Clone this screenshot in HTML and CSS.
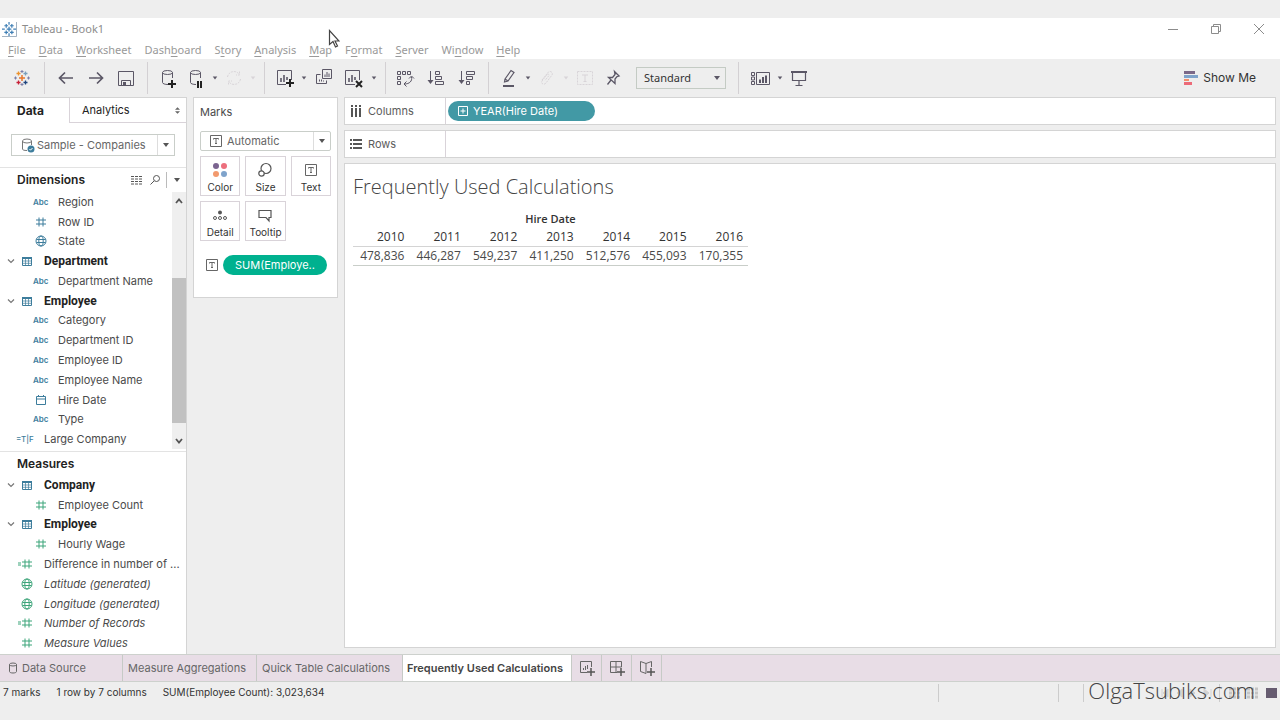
FILE: index.html
```html
<!DOCTYPE html>
<html lang="en">
<head>
    <meta charset="UTF-8">
    <meta name="viewport" content="width=device-width, initial-scale=1.0">
    <title>Tableau - Book1</title>
    <link rel="stylesheet" href="styles.css">
</head>
<body>
    <!-- shared icons -->
    <svg class="sprite" aria-hidden="true">
        <symbol id="i-caret" viewBox="0 0 8 8"><path d="M1 2h6L4 6z" fill="currentColor"/></symbol>
        <symbol id="i-logo" viewBox="0 0 16 16">
            <path d="M8 5v6M5 8h6" stroke="#e8762c" stroke-width="1.5"/>
            <path d="M4.500 1.500v4M2.500 3.500h4" stroke="#eb912c" stroke-width="1.300"/>
            <path d="M11.500 1.500v4M9.500 3.500h4" stroke="#7aa0bd" stroke-width="1.300"/>
            <path d="M4.500 10.500v4M2.500 12.500h4" stroke="#c72037" stroke-width="1.300"/>
            <path d="M11.500 10.500v4M9.500 12.500h4" stroke="#1f457e" stroke-width="1.300"/>
            <path d="M8 0v3M6.500 1.500h3M8 13v3M6.500 14.500h3M1.500 6.500v3M0 8h3M14.500 6.500v3M13 8h3" stroke="#7b7fa8"/>
        </symbol>
        <symbol id="i-logo-blue" viewBox="0 0 16 16">
            <path d="M0 15.500h15.500V0" fill="none" stroke="#9ab"/>
            <path d="M7.500 5v5M5 7.500h5M4.500 2v4M2.500 4h4M10.500 2v4M8.500 4h4M4.500 9v4M2.500 11h4M10.500 9v4M8.500 11h4M7.500 0v3M7.500 12v3M0 7.500h3M12 7.500h3" stroke="#3f7fb5" stroke-width="1.300"/>
        </symbol>
        <symbol id="i-back" viewBox="0 0 20 20"><path d="M17 10H4M9 4.500L3.500 10 9 15.500" fill="none" stroke="currentColor" stroke-width="1.700"/></symbol>
        <symbol id="i-forward" viewBox="0 0 20 20"><path d="M3 10h13M11 4.500l5.500 5.500-5.500 5.500" fill="none" stroke="currentColor" stroke-width="1.700"/></symbol>
        <symbol id="i-save" viewBox="0 0 20 20"><path d="M2.500 3.500h15v14h-15zM5.500 17v-4.500h9V17" fill="none" stroke="currentColor"/><path d="M7 14h3v3H7z" fill="currentColor"/></symbol>
        <symbol id="i-db-plus" viewBox="0 0 20 20"><path d="M10 16.500c-3 0-5.500-.8-5.500-2V4.500M14.500 10V4.500" fill="none" stroke="currentColor"/><ellipse cx="9.500" cy="4.500" rx="5" ry="2" fill="none" stroke="currentColor"/><path d="M14 12v8M10 16h8" stroke="#222" stroke-width="2"/></symbol>
        <symbol id="i-db-pause" viewBox="0 0 20 20"><path d="M10 16.500c-3 0-5.500-.8-5.500-2V4.500M14.500 10V4.500" fill="none" stroke="currentColor"/><ellipse cx="9.500" cy="4.500" rx="5" ry="2" fill="none" stroke="currentColor"/><path d="M12 13v7M15 13v7" stroke="#222" stroke-width="2"/></symbol>
        <symbol id="i-refresh" viewBox="0 0 20 20"><path d="M3.500 9A6.500 6.500 0 0 1 15 6M16.500 11A6.500 6.500 0 0 1 5 14M15.500 3.500V7H12M4.500 16.500V13H8" fill="none" stroke="currentColor" stroke-dasharray="2 1"/></symbol>
        <symbol id="i-sheet-plus" viewBox="0 0 20 20"><path d="M11 16.500H2.500v-14h14V12" fill="none" stroke="currentColor"/><path d="M6 14V10M9 14V7M12 12V9" stroke="currentColor" stroke-width="1.600"/><path d="M15 11v8M11 15h8" stroke="#222" stroke-width="2"/></symbol>
        <symbol id="i-sheet-copy" viewBox="0 0 20 20"><path d="M8.500 1.500h9v9h-9zM6.500 6.500h-4v9h10v-3" fill="none" stroke="currentColor"/><path d="M11 9V6.500M13 9V4M15 9V5.500M5.500 13.500v-2M7.500 13.500v-2M9.500 13.500v-1" stroke="currentColor"/></symbol>
        <symbol id="i-sheet-clear" viewBox="0 0 20 20"><path d="M11 16.500H1.500v-14h14V12" fill="none" stroke="currentColor"/><path d="M5 14V10M8 14V7M11 12V9" stroke="currentColor" stroke-width="1.600"/><path d="M12 13l6 6M18 13l-6 6" stroke="#222" stroke-width="2"/></symbol>
        <symbol id="i-swap" viewBox="0 0 20 20"><path d="M2.500 3.500h3v3h-3zM7.500 3.500h3v3h-3zM12.500 3.500h3v3h-3zM2.500 8.500h3v3h-3zM2.500 13.500h3v3h-3zM16.500 9c1 4-2 7-7 7M14 10.500L16.500 8l2.500 2.500M11.500 13.500L9 16l2.500 2.500" fill="none" stroke="currentColor"/></symbol>
        <symbol id="i-sort-asc" viewBox="0 0 20 20"><path d="M4.500 3v11" stroke="currentColor"/><path d="M1.500 12h6l-3 4z" fill="currentColor"/><path d="M9.500 3.500h4v3h-4zM9.500 8.500h6v3h-6zM9.500 13.500h8v3h-8z" fill="none" stroke="currentColor"/></symbol>
        <symbol id="i-sort-desc" viewBox="0 0 20 20"><path d="M4.500 3v11" stroke="currentColor"/><path d="M1.500 12h6l-3 4z" fill="currentColor"/><path d="M9.500 3.500h8v3h-8zM9.500 8.500h6v3h-6zM9.500 13.500h3v3h-3z" fill="none" stroke="currentColor"/></symbol>
        <symbol id="i-pen" viewBox="0 0 20 20"><path d="M6 11l6-8.500 3 2L9 13l-3.500 1zM6 11l3 2" fill="none" stroke="currentColor" stroke-width="1.200"/><path d="M4 18h11" stroke="currentColor" stroke-width="2"/></symbol>
        <symbol id="i-clip" viewBox="0 0 20 20"><path d="M5 12l6-7.500c2-2.500 5.500 0 4 2.500l-6 8c-2 2.500-5.500.5-4-2l5-6.500c1-1 2.500 0 2 1l-4 5" fill="none" stroke="currentColor" stroke-dasharray="2 1"/></symbol>
        <symbol id="i-label" viewBox="0 0 20 20"><path d="M2.500 3.500h15v13h-15z" fill="none" stroke="currentColor" stroke-dasharray="2 1"/><path d="M7 7h6M10 7v6.500M8.500 13.500h3" stroke="currentColor"/></symbol>
        <symbol id="i-pin" viewBox="0 0 20 20"><path d="M11.500 3.500l4.500 4.500-2 .5-2 2.500 0 4.500L5.500 9.500l4 0 2.500-3zM8 12l-3.500 4.500" fill="none" stroke="currentColor" stroke-width="1.300"/></symbol>
        <symbol id="i-cards" viewBox="0 0 22 20"><path d="M2.500 4.500h3v3h-3zM2.500 9h3v3h-3zM2.500 13.500h3v3h-3zM7.500 4.500h13v12h-13z" fill="none" stroke="currentColor"/><path d="M11 15v-3.500M14 15V9M17 15V7.500" stroke="currentColor" stroke-width="2"/></symbol>
        <symbol id="i-present" viewBox="0 0 20 20"><path d="M2 4h16" stroke="currentColor" stroke-width="2"/><path d="M3.500 5v7.500h13V5M10 13v5M6.500 17.500h7" fill="none" stroke="currentColor" stroke-width="1.200"/></symbol>
        <symbol id="i-hash" viewBox="0 0 12 12"><path d="M4 1.500v9M8 1.500v9M1 4h10M1 8h10" stroke="currentColor"/></symbol>
        <symbol id="i-calc-hash" viewBox="0 0 16 12"><path d="M8 1.500v9M12 1.500v9M5 4h10M5 8h10M1 5h3M1 7h3" stroke="currentColor"/></symbol>
        <symbol id="i-globe" viewBox="0 0 12 12"><circle cx="6" cy="6" r="5" fill="none" stroke="currentColor"/><ellipse cx="6" cy="6" rx="2.200" ry="5" fill="none" stroke="currentColor"/><path d="M1.500 4.500h9M1.500 7.500h9" stroke="currentColor"/></symbol>
        <symbol id="i-table" viewBox="0 0 12 12"><path d="M1.500 2.500h9v8h-9z" fill="none" stroke="currentColor"/><path d="M1.500 6h9M1.500 8.300h9M4.500 4v6.500M7.500 4v6.500" stroke="currentColor" stroke-width=".7"/><path d="M1 2h10v2H1z" fill="currentColor"/></symbol>
        <symbol id="i-date" viewBox="0 0 12 12"><path d="M1.500 2.500h9v8h-9zM1.500 5h9M3.500 1v2M8.500 1v2" fill="none" stroke="currentColor"/></symbol>
        <symbol id="i-chevron" viewBox="0 0 10 10"><path d="M2 3.500l3 3 3-3" fill="none" stroke="currentColor" stroke-width="1.200"/></symbol>
        <symbol id="i-text" viewBox="0 0 14 12"><path d="M1.500.5h11v11h-11z" fill="none" stroke="currentColor"/><path d="M4.500 4.500v-1h5v1M7 3.500v5M6 8.500h2" fill="none" stroke="currentColor"/></symbol>
    </svg>

    <header class="titlebar">
        <svg class="app-icon"><use href="#i-logo-blue"/></svg>
        <span class="app-title">Tableau - Book1</span>
        <div class="window-buttons">
            <button aria-label="Minimize"><svg viewBox="0 0 10 10"><path d="M0 5.500h10" stroke="currentColor"/></svg></button>
            <button aria-label="Restore"><svg viewBox="0 0 10 10"><path d="M.5 2.500h7v7h-7zM2.500 2V.5h7v7H8" fill="none" stroke="currentColor"/></svg></button>
            <button aria-label="Close"><svg viewBox="0 0 10 10"><path d="M0 0l10 10M10 0L0 10" stroke="currentColor"/></svg></button>
        </div>
        <svg class="pointer" viewBox="0 0 12 20"><path d="M1.500 1.500v14l3.500-3 2.500 5.500 2-1-2.500-5h4z" fill="#fff" stroke="#444" stroke-width="1.200"/></svg>
    </header>

    <nav class="menu">
        <a href="#"><u>F</u>ile</a>
        <a href="#"><u>D</u>ata</a>
        <a href="#"><u>W</u>orksheet</a>
        <a href="#">Dash<u>b</u>oard</a>
        <a href="#">S<u>t</u>ory</a>
        <a href="#"><u>A</u>nalysis</a>
        <a href="#"><u>M</u>ap</a>
        <a href="#">F<u>o</u>rmat</a>
        <a href="#"><u>S</u>erver</a>
        <a href="#">Wi<u>n</u>dow</a>
        <a href="#"><u>H</u>elp</a>
    </nav>

    <div class="toolbar">
        <button class="start" aria-label="Start page"><svg><use href="#i-logo"/></svg></button>
        <div class="tool-group">
            <button class="wide" aria-label="Undo"><svg><use href="#i-back"/></svg></button>
            <button class="wide" aria-label="Redo"><svg><use href="#i-forward"/></svg></button>
            <button class="wide" aria-label="Save"><svg><use href="#i-save"/></svg></button>
        </div>
        <div class="tool-group">
            <button aria-label="New data source"><svg><use href="#i-db-plus"/></svg></button>
            <button aria-label="Pause updates"><svg><use href="#i-db-pause"/></svg></button>
            <button class="drop" aria-label="Update options"><svg><use href="#i-caret"/></svg></button>
            <button class="off" aria-label="Run update"><svg><use href="#i-refresh"/></svg></button>
            <button class="drop off" aria-label="Run options"><svg><use href="#i-caret"/></svg></button>
        </div>
        <div class="tool-group">
            <button aria-label="New worksheet"><svg><use href="#i-sheet-plus"/></svg></button>
            <button class="drop" aria-label="New options"><svg><use href="#i-caret"/></svg></button>
            <button class="wide" aria-label="Duplicate"><svg><use href="#i-sheet-copy"/></svg></button>
            <button class="wide" aria-label="Clear sheet"><svg><use href="#i-sheet-clear"/></svg></button>
            <button class="drop" aria-label="Clear options"><svg><use href="#i-caret"/></svg></button>
        </div>
        <div class="tool-group tight">
            <button class="wide" aria-label="Swap rows and columns"><svg><use href="#i-swap"/></svg></button>
            <button class="wide" aria-label="Sort ascending"><svg><use href="#i-sort-asc"/></svg></button>
            <button class="wide" aria-label="Sort descending"><svg><use href="#i-sort-desc"/></svg></button>
        </div>
        <div class="tool-group">
            <button aria-label="Highlight"><svg><use href="#i-pen"/></svg></button>
            <button class="drop" aria-label="Highlight options"><svg><use href="#i-caret"/></svg></button>
            <button class="off" aria-label="Group members"><svg><use href="#i-clip"/></svg></button>
            <button class="drop off" aria-label="Group options"><svg><use href="#i-caret"/></svg></button>
            <button class="off" aria-label="Show mark labels"><svg><use href="#i-label"/></svg></button>
            <button aria-label="Fix axes"><svg><use href="#i-pin"/></svg></button>
            <div class="fit">
                <select aria-label="Fit"><option>Standard</option></select>
                <svg><use href="#i-caret"/></svg>
            </div>
        </div>
        <div class="tool-group">
            <button class="wide" aria-label="Show or hide cards"><svg class="cards"><use href="#i-cards"/></svg></button>
            <button class="drop" aria-label="Card options"><svg><use href="#i-caret"/></svg></button>
            <button aria-label="Presentation mode"><svg><use href="#i-present"/></svg></button>
        </div>
        <button class="show-me">
            <svg viewBox="0 0 14 14"><path d="M0 0h11v3H0z" fill="#7b6888"/><path d="M0 4h14v3H0z" fill="#7fa3cb"/><path d="M0 8h5v2H0z" fill="#f28e6b"/><path d="M0 11h8v3H0z" fill="#ec6a78"/></svg>
            Show Me
        </button>
    </div>

    <div class="workspace">
        <aside class="sidebar">
            <div class="side-tabs">
                <button class="active">Data</button>
                <button class="analytics">Analytics
                    <svg viewBox="0 0 6 8"><path d="M0 3l3-3 3 3zM0 5l3 3 3-3z" fill="currentColor"/></svg>
                </button>
            </div>
            <div class="source">
                <svg class="db" viewBox="0 0 14 15"><path d="M6 12.500c-3 0-4.500-.5-4.500-1.500V3M10.500 7V3" fill="none" stroke="#777"/><ellipse cx="6" cy="3" rx="4.500" ry="2" fill="none" stroke="#777"/><circle cx="10" cy="11" r="3.500" fill="#3d7d9c"/><path d="M8.500 11l1 1.200 2-2.200" fill="none" stroke="#fff"/></svg>
                <select aria-label="Data source"><option>Sample - Companies</option></select>
                <span class="arrow"><svg><use href="#i-caret"/></svg></span>
            </div>

            <div class="side-head lined">
                <h2>Dimensions</h2>
                <button aria-label="View data"><svg viewBox="0 0 12 12"><path d="M0 2.500h12M0 5h12M0 7.500h12M0 10h12" stroke="#555" stroke-dasharray="3 1"/></svg></button>
                <button aria-label="Find field"><svg viewBox="0 0 12 12"><circle cx="7.500" cy="4.500" r="3" fill="none" stroke="#555"/><path d="M5 7l-3.500 3.500" stroke="#555"/></svg></button>
                <button class="more" aria-label="Field options"><svg><use href="#i-caret"/></svg></button>
            </div>
            <div class="dimensions">
                <ul class="fields">
                    <li class="child"><span class="abc">Abc</span>Region</li>
                    <li class="child"><svg><use href="#i-hash"/></svg>Row ID</li>
                    <li class="child"><svg><use href="#i-globe"/></svg>State</li>
                    <li class="table"><svg class="chev"><use href="#i-chevron"/></svg><svg><use href="#i-table"/></svg>Department</li>
                    <li class="child"><span class="abc">Abc</span>Department Name</li>
                    <li class="table"><svg class="chev"><use href="#i-chevron"/></svg><svg><use href="#i-table"/></svg>Employee</li>
                    <li class="child"><span class="abc">Abc</span>Category</li>
                    <li class="child"><span class="abc">Abc</span>Department ID</li>
                    <li class="child"><span class="abc">Abc</span>Employee ID</li>
                    <li class="child"><span class="abc">Abc</span>Employee Name</li>
                    <li class="child"><svg><use href="#i-date"/></svg>Hire Date</li>
                    <li class="child"><span class="abc">Abc</span>Type</li>
                    <li class="root"><span class="abc tf">=T|F</span>Large Company</li>
                </ul>
                <div class="scroll">
                    <button aria-label="Scroll up"><svg viewBox="0 0 8 8"><path d="M1 6l3-3.500L7 6" fill="none" stroke="#555" stroke-width="1.800"/></svg></button>
                    <div class="track"><div class="thumb"></div></div>
                    <button aria-label="Scroll down"><svg viewBox="0 0 8 8"><path d="M1 2l3 3.500L7 2" fill="none" stroke="#555" stroke-width="1.800"/></svg></button>
                </div>
            </div>

            <div class="side-head measures-head">
                <h2>Measures</h2>
            </div>
            <ul class="fields measures">
                <li class="table"><svg class="chev"><use href="#i-chevron"/></svg><svg><use href="#i-table"/></svg>Company</li>
                <li class="child"><svg><use href="#i-hash"/></svg>Employee Count</li>
                <li class="table"><svg class="chev"><use href="#i-chevron"/></svg><svg><use href="#i-table"/></svg>Employee</li>
                <li class="child"><svg><use href="#i-hash"/></svg>Hourly Wage</li>
                <li class="root"><svg class="calc"><use href="#i-calc-hash"/></svg>Difference in number of ...</li>
                <li class="root gen"><svg><use href="#i-globe"/></svg>Latitude (generated)</li>
                <li class="root gen"><svg><use href="#i-globe"/></svg>Longitude (generated)</li>
                <li class="root gen"><svg class="calc"><use href="#i-calc-hash"/></svg>Number of Records</li>
                <li class="root gen"><svg><use href="#i-hash"/></svg>Measure Values</li>
            </ul>
        </aside>

        <section class="marks">
            <h3>Marks</h3>
            <div class="mark-type">
                <svg class="t-icon"><use href="#i-text"/></svg>
                <select aria-label="Mark type"><option>Automatic</option></select>
                <span class="arrow"><svg><use href="#i-caret"/></svg></span>
            </div>
            <div class="mark-buttons">
                <button><svg viewBox="0 0 16 16"><circle cx="4" cy="4" r="3" fill="#7b6490"/><circle cx="12" cy="4" r="3" fill="#ec6f7d"/><circle cx="4" cy="12" r="3" fill="#f29a6e"/><circle cx="12" cy="12" r="3" fill="#7fa3cb"/></svg>Color</button>
                <button><svg viewBox="0 0 16 16"><circle cx="9" cy="6.500" r="5" fill="none" stroke="#555" stroke-width="1.200"/><circle cx="4.500" cy="11.500" r="2.700" fill="#fff" stroke="#555" stroke-width="1.200"/></svg>Size</button>
                <button><svg viewBox="0 0 16 16"><path d="M2.500 2.500h11v11h-11zM5.500 6.500v-1h5v1M8 5.500v5M7 10.500h2" fill="none" stroke="#666"/></svg>Text</button>
                <button><svg viewBox="0 0 16 16"><circle cx="8" cy="5.500" r="2" fill="#555"/><circle cx="3" cy="11" r="1.500" fill="none" stroke="#555"/><circle cx="8" cy="11" r="1.500" fill="none" stroke="#555"/><circle cx="13" cy="11" r="1.500" fill="none" stroke="#555"/></svg>Detail</button>
                <button><svg viewBox="0 0 16 16"><path d="M2 3.500h12v7h-2V14l-3-3.500H2z" fill="none" stroke="#555" stroke-width="1.200"/></svg>Tooltip</button>
            </div>
            <div class="mark-field">
                <svg class="t-icon"><use href="#i-text"/></svg>
                <button class="pill measure">SUM(Employe..</button>
            </div>
        </section>

        <main class="sheet">
            <div class="shelf">
                <div class="shelf-name">
                    <svg viewBox="0 0 12 12"><path d="M2 0v2M6 0v2M10 0v2M2 3v9M6 3v9M10 3v9" stroke="#555" stroke-width="2"/></svg>Columns
                </div>
                <button class="pill dimension">
                    <svg viewBox="0 0 10 10"><path d="M.5.5h9v9h-9zM2.500 5h5M5 2.500v5" fill="none" stroke="#fff"/></svg>YEAR(Hire Date)
                </button>
            </div>
            <div class="shelf">
                <div class="shelf-name">
                    <svg viewBox="0 0 12 12"><path d="M0 2h2M3 2h9M0 6h2M3 6h9M0 10h2M3 10h9" stroke="#555" stroke-width="2"/></svg>Rows
                </div>
            </div>
            <div class="view">
                <h1>Frequently Used Calculations</h1>
                <table>
                    <thead>
                        <tr><th colspan="7" class="group">Hire Date</th></tr>
                        <tr><th>2010</th><th>2011</th><th>2012</th><th>2013</th><th>2014</th><th>2015</th><th>2016</th></tr>
                    </thead>
                    <tbody>
                        <tr><td>478,836</td><td>446,287</td><td>549,237</td><td>411,250</td><td>512,576</td><td>455,093</td><td>170,355</td></tr>
                    </tbody>
                </table>
            </div>
        </main>
    </div>

    <div class="sheet-tabs">
        <button class="data-source"><svg viewBox="0 0 10 12"><ellipse cx="5" cy="2.500" rx="3.500" ry="1.500" fill="none" stroke="#666"/><path d="M1.500 2.500v7c0 2 7 2 7 0v-7" fill="none" stroke="#666"/></svg>Data Source</button>
        <button class="aggregations">Measure Aggregations</button>
        <button class="quick">Quick Table Calculations</button>
        <button class="active">Frequently Used Calculations</button>
        <button class="new" aria-label="New worksheet"><svg viewBox="0 0 16 16"><path d="M8 12.500H1.500v-11h11V7M4.500 10V8M6.500 10V6M8.500 9V5" fill="none" stroke="#666"/><path d="M12 8v8M8 12h8" stroke="#555" stroke-width="1.500"/></svg></button>
        <button class="new" aria-label="New dashboard"><svg viewBox="0 0 16 16"><path d="M8 12.500H1.500v-11h11V7M1.500 7h11M7 1.500v11" fill="none" stroke="#666"/><path d="M12 8v8M8 12h8" stroke="#555" stroke-width="1.500"/></svg></button>
        <button class="new" aria-label="New story"><svg viewBox="0 0 16 16"><path d="M7 13.500l-5.500-2v-10l5.500 2 5.500-2V7M7 3.500v10" fill="none" stroke="#666"/><path d="M12 8v8M8 12h8" stroke="#555" stroke-width="1.500"/></svg></button>
    </div>

    <footer class="status">
        <span>7 marks</span>
        <span>1 row by 7 columns</span>
        <span>SUM(Employee Count): 3,023,634</span>
        <div class="status-cells">
            <div class="cell user"></div>
            <div class="cell"></div>
            <div class="cell nav"><svg viewBox="0 0 130 12"><path d="M78 2v8M84 2l-5 4 5 4zM98 2l-5 4 5 4zM106 2l5 4-5 4zM120 2l5 4-5 4zM127 2v8" fill="#d2d2d2" stroke="#d2d2d2"/></svg></div>
            <div class="cell views">
                <svg viewBox="0 0 34 12"><path d="M2 2h12M2 6h12M2 10h12M20 2h12M20 6h12M20 10h12" stroke="#c4c4c4" stroke-width="3" stroke-dasharray="3 1"/></svg>
                <button aria-label="Show sheet sorter"></button>
            </div>
        </div>
        <div class="watermark">OlgaTsubiks.com</div>
    </footer>
</body>
</html>
```

FILE: styles.css
```css
* {
    box-sizing: border-box;
}

body {
    margin: 0;
    padding-top: 18px;
    min-height: 100vh;
    display: flex;
    flex-direction: column;
    background: #eeeeee;
    color: #4a4a4a;
    font-family: Inter, "Liberation Sans", sans-serif;
    font-size: 11px;
    line-height: 16px;
}

button, select {
    font: inherit;
    color: inherit;
    background: none;
    border: none;
    padding: 0;
    margin: 0;
}

button {
    display: flex;
    align-items: center;
    justify-content: center;
    white-space: nowrap;
}

select {
    appearance: none;
    flex: 1;
    min-width: 0;
}

svg {
    display: block;
    flex: none;
}

h1, h2, h3, ul {
    margin: 0;
    padding: 0;
    font-weight: normal;
}

.sprite {
    position: absolute;
    width: 0;
    height: 0;
}

/* title bar and menu */
.titlebar {
    position: relative;
    display: flex;
    align-items: center;
    height: 22px;
    padding-left: 2px;
    background: #fff;
    color: #8c8c8c;
    font-family: "Noto Sans", sans-serif;
}

.app-icon {
    width: 15px;
    height: 15px;
    margin-right: 5px;
}

.window-buttons {
    display: flex;
    margin-left: auto;
}

.window-buttons button {
    width: 43px;
    height: 18px;
}

.window-buttons svg {
    width: 10px;
    height: 10px;
}

.pointer {
    position: absolute;
    left: 328px;
    top: 11px;
    width: 12px;
    height: 20px;
    z-index: 2;
}

.menu {
    display: flex;
    gap: 13px;
    height: 19px;
    padding: 2px 8px 0;
    background: #fff;
    font-family: "Noto Sans", sans-serif;
}

.menu a {
    color: #999;
    text-decoration: none;
}

.menu u {
    text-underline-offset: 2px;
}

/* toolbar */
.toolbar {
    display: flex;
    align-items: center;
    height: 38px;
    color: #5b5766;
}

.toolbar .start {
    width: 44px;
}

.start svg {
    width: 16px;
    height: 16px;
}

.tool-group {
    display: flex;
    align-items: center;
    height: 32px;
    padding: 0 6px;
    border-left: 1px solid #d3d0d3;
}

.tool-group.tight {
    gap: 1px;
    padding-left: 4px;
}

.tool-group button {
    width: 28px;
    height: 24px;
}

.tool-group button svg {
    width: 20px;
    height: 20px;
}

.tool-group .wide {
    width: 30px;
}

.tool-group .drop {
    width: 10px;
}

.tool-group .drop svg {
    width: 6px;
    height: 6px;
}

.tool-group .wide .cards {
    width: 22px;
}

.tool-group .off {
    color: #d8d4d8;
}

.fit {
    display: flex;
    align-items: center;
    width: 90px;
    height: 22px;
    margin: 0 6px 0 9px;
    padding: 0 4px 0 7px;
    border: 1px solid #c4cbc4;
    color: #333;
    font-family: "Noto Sans", sans-serif;
}

.fit svg {
    width: 8px;
    height: 8px;
    color: #5b5766;
}

.show-me {
    gap: 5px;
    margin-left: auto;
    margin-right: 24px;
    color: #333;
    font-size: 12px;
}

.show-me svg {
    width: 14px;
    height: 14px;
}

/* data pane */
.workspace {
    flex: 1;
    display: flex;
    gap: 6px;
    padding-right: 4px;
}

.sidebar {
    display: flex;
    flex-direction: column;
    width: 187px;
    background: #fff;
    border-right: 1px solid #d4d4d4;
    border-top: 1px solid #d4d4d4;
}

.side-tabs {
    display: flex;
    height: 25px;
    color: #222;
}

.side-tabs button {
    flex: 1;
}

.side-tabs .active {
    flex: none;
    width: 69px;
    padding-right: 8px;
    font-size: 12px;
    font-weight: 700;
}

.side-tabs .analytics {
    justify-content: space-between;
    padding: 0 6px 0 12px;
    border: 1px solid #d9d3d9;
    border-width: 0 0 1px 1px;
}

.analytics svg {
    width: 5px;
    height: 7px;
    color: #666;
}

.source {
    display: flex;
    align-items: center;
    height: 22px;
    margin: 11px 11px;
    padding-left: 9px;
    border: 1px solid #c9cec9;
    color: #666;
}

.source .db {
    width: 14px;
    height: 15px;
    margin-right: 2px;
}

.arrow {
    display: flex;
    align-items: center;
    justify-content: center;
    width: 17px;
    height: 100%;
    border-left: 1px solid #ddd;
    color: #555;
}

.arrow svg {
    width: 8px;
    height: 8px;
}

.side-head {
    display: flex;
    align-items: center;
    height: 24px;
    padding-left: 17px;
}

.side-head.lined {
    height: 25px;
    border-top: 1px solid #e3e3e3;
}

.side-head h2 {
    flex: 1;
    color: #222;
    font-size: 12px;
    font-weight: 600;
}

.side-head button {
    width: 18px;
    height: 16px;
}

.side-head button svg {
    width: 12px;
    height: 12px;
}

.side-head .more {
    width: 20px;
    margin-left: 2px;
    border-left: 1px solid #bbb;
    color: #555;
}

.side-head .more svg {
    width: 8px;
    height: 8px;
}

.dimensions {
    flex: 13;
    display: flex;
    padding-bottom: 2px;
}

.fields {
    flex: 1;
    display: flex;
    flex-direction: column;
    list-style: none;
    white-space: nowrap;
}

.fields.measures {
    flex: 9;
    padding-bottom: 1px;
}

.fields li {
    flex: 1;
    display: flex;
    align-items: center;
}

.fields svg, .abc {
    width: 12px;
    height: 12px;
    color: #3d7d9c;
}

.fields .abc {
    width: 16px;
    height: auto;
    font-size: 8px;
    font-weight: 600;
}

.fields .tf {
    font-weight: 500;
}

.fields .child {
    padding-left: 33px;
}

.child svg {
    margin: 0 11px 0 2px;
}

.child .abc {
    margin-right: 9px;
}

.fields .table {
    padding-left: 6px;
    color: #222;
    font-family: Roboto, "Liberation Sans", sans-serif;
    font-size: 12px;
    font-weight: 700;
}

.table svg {
    margin-right: 11px;
}

.fields .chev {
    width: 10px;
    height: 10px;
    margin-right: 5px;
    color: #777;
}

.fields .root {
    padding-left: 16px;
}

.root svg {
    margin: 0 11px 0 5px;
}

.root .calc {
    width: 16px;
    margin: 0 11px 0 1px;
}

.root .abc {
    width: 28px;
}

.fields .gen {
    font-style: italic;
}

.measures .child svg, .measures .root svg {
    color: #3da57a;
}

.scroll {
    display: flex;
    flex-direction: column;
    width: 14px;
    background: #efefef;
}

.scroll button {
    height: 17px;
}

.scroll svg {
    width: 8px;
    height: 8px;
}

.track {
    flex: 1;
    display: flex;
    flex-direction: column;
    justify-content: flex-end;
    padding-bottom: 9px;
}

.thumb {
    height: 68%;
    background: #c1c1c1;
}

.measures-head {
    border-top: 1px solid #e3e3e3;
}

/* marks card */
.marks {
    align-self: flex-start;
    width: 145px;
    padding: 6px 6px 22px;
    background: #fff;
    border: 1px solid #d4d4d4;
}

.marks h3 {
    font-size: 11px;
}

.mark-type {
    display: flex;
    align-items: center;
    height: 20px;
    margin-top: 11px;
    padding-left: 8px;
    border: 1px solid #c9cec9;
    border-radius: 2px;
    color: #666;
}

.t-icon {
    width: 14px;
    height: 12px;
    margin-right: 4px;
}

.mark-buttons {
    display: grid;
    grid-template-columns: 1fr 1fr 1fr;
    gap: 5px;
    margin-top: 5px;
}

.mark-buttons button {
    flex-direction: column;
    height: 40px;
    padding-top: 4px;
    border: 1px solid #d9d3d9;
    font-size: 10px;
    color: #333;
}

.mark-buttons svg {
    width: 16px;
    height: 16px;
    margin-bottom: 1px;
}

.mark-field {
    display: flex;
    align-items: center;
    margin-top: 14px;
    padding-left: 5px;
    color: #666;
}

.pill {
    height: 20px;
    border-radius: 10px;
    color: #fff;
}

.pill.measure {
    width: 104px;
    background: #00b18f;
}

.pill.dimension {
    justify-content: flex-start;
    width: 147px;
    margin-left: 2px;
    padding-left: 10px;
    background: #4299a5;
}

.pill svg {
    width: 10px;
    height: 10px;
    margin-right: 5px;
}

/* shelves and view */
.sheet {
    flex: 1;
    display: flex;
    flex-direction: column;
    gap: 5px;
    padding-bottom: 6px;
}

.shelf {
    display: flex;
    align-items: center;
    height: 28px;
    background: #fff;
    border: 1px solid #d4d4d4;
}

.shelf-name {
    display: flex;
    align-items: center;
    width: 101px;
    height: 100%;
    padding-left: 5px;
    border-right: 1px solid #d9d3d9;
    color: #5c5c5c;
}

.shelf-name svg {
    width: 12px;
    height: 12px;
    margin-right: 6px;
}

.view {
    flex: 1;
    padding: 10px 8px;
    background: #fff;
    border: 1px solid #d4d4d4;
    font-family: "Open Sans", "Noto Sans", sans-serif;
}

.view h1 {
    font-size: 20px;
    font-weight: 300;
    line-height: 26px;
    color: #444;
}

.view table {
    width: 395px;
    margin-top: 9px;
    border-collapse: collapse;
    table-layout: fixed;
    text-align: right;
    font-size: 12px;
    line-height: 18px;
}

.view th, .view td {
    padding: 0 5px 0 0;
    font-weight: 400;
}

.view th {
    font-weight: 500;
    color: #333;
}

.view .group {
    text-align: center;
    padding: 0;
    font-size: 11px;
    font-weight: 600;
    line-height: 19px;
}

.view tbody tr {
    border-top: 1px solid #d4d4d4;
    border-bottom: 1px solid #c9cec9;
}

/* sheet tabs */
.sheet-tabs {
    display: flex;
    height: 28px;
    background: #e8dde6;
    border-top: 1px solid #cdd1cd;
    border-bottom: 1px solid #cdd1cd;
    color: #666;
}

.sheet-tabs button {
    justify-content: flex-start;
    padding: 0 6px 0 5px;
    border-right: 1px solid #c6cac6;
}

.sheet-tabs .data-source {
    width: 123px;
    padding-left: 8px;
}

.data-source svg {
    width: 10px;
    height: 12px;
    margin-right: 4px;
}

.sheet-tabs .aggregations {
    width: 134px;
}

.sheet-tabs .quick {
    width: 146px;
}

.sheet-tabs .active {
    width: 169px;
    padding: 0 4px;
    background: #fff;
    color: #444;
    font-weight: 600;
}

.sheet-tabs .new {
    justify-content: center;
    width: 30px;
    padding: 0;
}

.new svg {
    width: 16px;
    height: 16px;
}

/* status bar */
.status {
    position: relative;
    display: flex;
    gap: 16px;
    height: 38px;
    padding: 2px 3px 0;
    color: #333;
    font-size: 10px;
}

.status-cells {
    display: flex;
    margin-left: auto;
}

.cell {
    display: flex;
    align-items: center;
    width: 25px;
    height: 18px;
    border-left: 1px solid #ccc;
}

.cell.user {
    width: 120px;
}

.cell.nav {
    width: 136px;
}

.cell.nav svg {
    width: 130px;
    height: 12px;
}

.cell.views {
    width: 58px;
    gap: 5px;
    padding-left: 7px;
}

.views svg {
    width: 34px;
    height: 12px;
}

.views button {
    flex: none;
    width: 11px;
    height: 10px;
    background: #665c70;
}

.watermark {
    position: absolute;
    right: 25px;
    top: -5px;
    color: #444;
    font-family: "Open Sans", sans-serif;
    font-size: 22px;
    font-weight: 300;
    line-height: 26px;
}
```
